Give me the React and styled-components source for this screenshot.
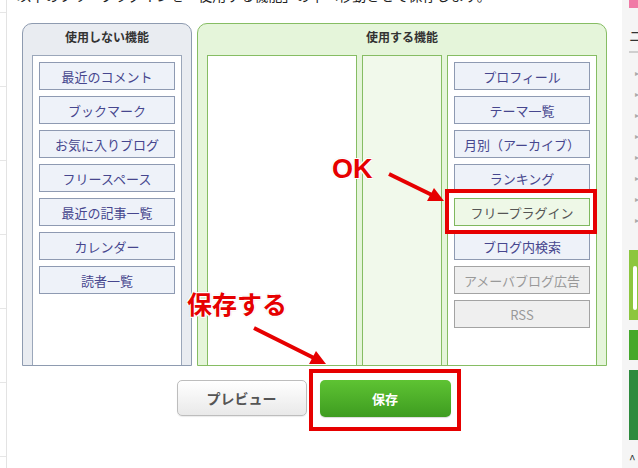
import React from "react";
import styled, { createGlobalStyle, css } from "styled-components";

const GlobalStyle = createGlobalStyle`
  html, body {
    margin: 0;
    padding: 0;
    background: #fff;
  }
  body {
    font-family: "Noto Sans CJK JP", "Noto Sans", sans-serif;
    color: #333;
  }
`;

const unused = [
  "最近のコメント",
  "ブックマーク",
  "お気に入りブログ",
  "フリースペース",
  "最近の記事一覧",
  "カレンダー",
  "読者一覧",
];

const used = [
  { label: "プロフィール" },
  { label: "テーマ一覧" },
  { label: "月別（アーカイブ）" },
  { label: "ランキング" },
  { label: "フリープラグイン", kind: "active" },
  { label: "ブログ内検索" },
  { label: "アメーバブログ広告", kind: "disabled" },
  { label: "RSS", kind: "disabled" },
];

const App = () => {
  return (
    <>
      <GlobalStyle />
      <Page>
        <LeftRail>
          {[0, 1, 2, 3, 4, 5, 6].map((i) => (
            <RailRow key={i} />
          ))}
        </LeftRail>

        <Main>
          <Lead>以下のフリープラグインを「使用する機能」の中へ移動させて保存します。</Lead>
          <Panels>
            <Panel variant="off">
              <PanelTitle>使用しない機能</PanelTitle>
              <Columns>
                <Column variant="off">
                  {unused.map((t) => (
                    <Item key={t}>{t}</Item>
                  ))}
                </Column>
              </Columns>
            </Panel>
            <Panel variant="on" grow>
              <PanelTitle>使用する機能</PanelTitle>
              <Columns>
                <Column variant="on" />
                <Column variant="middle" grow />
                <Column variant="on">
                  {used.map((it) => (
                    <Item key={it.label} kind={it.kind}>
                      {it.label}
                    </Item>
                  ))}
                </Column>
              </Columns>
            </Panel>
          </Panels>
          <Actions>
            <PreviewButton>プレビュー</PreviewButton>
            <SaveButton>保存</SaveButton>
          </Actions>
        </Main>

        <Sidebar>
          <PinkBar />
          <SideHeading>ニュース</SideHeading>
          <SideList>
            {[0, 1, 2, 3, 4, 5, 6, 7].map((i) => (
              <SideItem key={i}>▸</SideItem>
            ))}
          </SideList>
          <Banner color="#8cc63e" h={70}>
            <BannerMark />
          </Banner>
          <Banner color="#45a82b" h={30} />
          <Banner color="#2d8a3d" h={70} />
          <Caret>^</Caret>
        </Sidebar>

        {/* annotations drawn over the screenshot */}
        <Callout style={{ left: 445, top: 189, width: 152, height: 45 }} />
        <Callout style={{ left: 309, top: 369, width: 152, height: 62 }} />
        <Note latin style={{ left: 332, top: 152 }}>OK</Note>
        <Note style={{ left: 187, top: 283 }}>保存する</Note>
        <Arrows width="638" height="468" viewBox="0 0 638 468">
          <line x1="389" y1="174" x2="432" y2="195" />
          <polygon points="444,201 427,201 434,188" />
          <line x1="254" y1="328" x2="314" y2="358" />
          <polygon points="326,364 309,364 316,351" />
        </Arrows>
      </Page>
    </>
  );
};

const Page = styled.div`
  position: relative;
  display: flex;
  width: 638px;
  height: 468px;
  overflow: hidden;
`;

const LeftRail = styled.div`
  width: 6px;
  flex-shrink: 0;
  border-right: 1px solid #e3e3e3;
  padding-top: 12px;
`;

const RailRow = styled.div`
  height: 73px;
  border-top: 1px solid #e6e6e6;
`;

const Main = styled.div`
  width: 615px;
  flex-shrink: 0;
  padding-left: 15px;
  box-sizing: border-box;
`;

const Lead = styled.p`
  margin: -15px 0 18px -5px;
  font-size: 14px;
  line-height: 20px;
  color: #222;
  white-space: nowrap;
`;

const Panels = styled.div`
  display: flex;
  gap: 5px;
  width: 585px;
  height: 343px;
`;

const Panel = styled.div`
  display: flex;
  flex-direction: column;
  box-sizing: border-box;
  width: ${(p) => (p.grow ? "auto" : "170px")};
  flex: ${(p) => (p.grow ? 1 : "none")};
  border-radius: 10px 10px 0 0;
  ${(p) =>
    p.variant === "on"
      ? css`
          background: #e5f5da;
          border: 1px solid #86bd63;
        `
      : css`
          background: #e9ecf1;
          border: 1px solid #8e9bb0;
        `}
`;

const PanelTitle = styled.div`
  line-height: 26px;
  padding-bottom: 5px;
  text-align: center;
  font-size: 12px;
  font-weight: 700;
  color: #333;
`;

const Columns = styled.div`
  flex: 1;
  display: flex;
  gap: 5px;
  padding: 0 9px;
`;

const Column = styled.div`
  box-sizing: border-box;
  width: ${(p) => (p.grow ? "auto" : "150px")};
  flex: ${(p) => (p.grow ? 1 : "none")};
  display: flex;
  flex-direction: column;
  gap: 6px;
  padding: 6px 6px;
  ${(p) =>
    p.variant === "off" &&
    css`
      background: #fff;
      border: 1px solid #9ba7ba;
      border-bottom: none;
    `}
  ${(p) =>
    p.variant === "on" &&
    css`
      background: #fff;
      border: 1px solid #86bd63;
      border-bottom: none;
    `}
  ${(p) =>
    p.variant === "middle" &&
    css`
      background: #f1f9eb;
      border: 1px solid #86bd63;
      border-bottom: none;
    `}
`;

const Item = styled.div`
  height: 28px;
  box-sizing: border-box;
  display: flex;
  align-items: center;
  justify-content: center;
  font-size: 13px;
  ${(p) =>
    p.kind === "active"
      ? css`
          background: #eef8e7;
          border: 1px solid #7fb85e;
          color: #555;
        `
      : p.kind === "disabled"
      ? css`
          background: #efefef;
          border: 1px solid #a3a3a3;
          color: #999;
        `
      : css`
          background: #eef2f9;
          border: 1px solid #8e9ab2;
          color: #46468e;
        `}
`;

const Actions = styled.div`
  width: 585px;
  display: flex;
  justify-content: center;
  align-items: flex-start;
  gap: 13px;
  margin-top: 14px;
`;

const BaseButton = styled.button`
  width: 130px;
  height: 36px;
  border-radius: 5px;
  font-family: "Noto Sans CJK JP", sans-serif;
  font-size: 14px;
  font-weight: 700;
  cursor: pointer;
`;

const PreviewButton = styled(BaseButton)`
  margin-left: -2px;
  border: 1px solid #bdbdbd;
  background: linear-gradient(#ffffff, #e9e9e9);
  color: #555;
  box-shadow: 0 1px 1px rgba(0, 0, 0, 0.08);
`;

const SaveButton = styled(BaseButton)`
  width: 131px;
  height: 37px;
  border: none;
  background: linear-gradient(#5ec333, #3e9c20);
  color: #fff;
  font-size: 13px;
  box-shadow: 0 1px 1px rgba(0, 0, 0, 0.15);
`;

const Sidebar = styled.div`
  flex: 1;
  background: #f5f5f5;
  padding-left: 7px;
  overflow: hidden;
  white-space: nowrap;
`;

const PinkBar = styled.div`
  height: 8px;
  background: #f07aa6;
`;

const SideHeading = styled.div`
  margin-top: 18px;
  font-size: 14px;
  line-height: 18px;
  color: #333;
  padding-bottom: 7px;
  border-bottom: 2px solid #cfcfcf;
`;

const SideList = styled.div`
  padding: 9px 0 10px 6px;
`;

const SideItem = styled.div`
  height: 21px;
  font-size: 8px;
  line-height: 21px;
  color: #aaa;
`;

const Banner = styled.div`
  position: relative;
  height: ${(p) => p.h}px;
  background: ${(p) => p.color};
  margin-top: 10px;
`;

const BannerMark = styled.div`
  position: absolute;
  left: 4px;
  top: 16px;
  width: 4px;
  height: 44px;
  background: #fff;
  border-radius: 2px;
`;

const Caret = styled.div`
  margin-top: 10px;
  font-size: 12px;
  color: #333;
`;

const Callout = styled.div`
  position: absolute;
  box-sizing: border-box;
  border: 4px solid #e60000;
`;

const Note = styled.span`
  position: absolute;
  font-family: ${(p) =>
    p.latin ? '"Liberation Sans", Arial, sans-serif' : '"Noto Sans CJK JP", sans-serif'};
  font-size: ${(p) => (p.latin ? "27px" : "25px")};
  line-height: ${(p) => (p.latin ? "34px" : "40px")};
  font-weight: 700;
  color: #e60000;
  text-shadow: -1px -1px 0 #fff, 1px -1px 0 #fff, -1px 1px 0 #fff, 1px 1px 0 #fff,
    0 0 2px #888;
  white-space: nowrap;
`;

const Arrows = styled.svg`
  position: absolute;
  left: 0;
  top: 0;
  pointer-events: none;
  line {
    stroke: #e60000;
    stroke-width: 4;
  }
  polygon {
    fill: #e60000;
  }
`;

export default App;
